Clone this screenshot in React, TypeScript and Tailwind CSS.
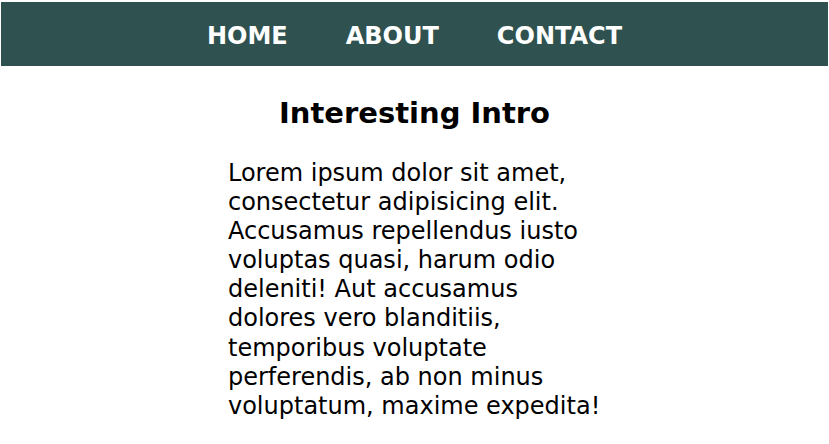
export default function App() {
  const font = { fontFamily: '"DejaVu Sans", Verdana, sans-serif' };
  return (
    <div className="min-h-screen bg-white text-black" style={font}>
      <nav className="mx-[1px] mt-[2px] flex h-[64px] items-center justify-center bg-[#2f5250] pt-[4px]">
        <ul className="flex items-center gap-[58px] text-[24px] font-bold leading-[28px] text-white">
          <li>HOME</li>
          <li>ABOUT</li>
          <li>CONTACT</li>
        </ul>
      </nav>
      <main className="flex flex-col items-center">
        <h1 className="mt-[30px] text-[29px] font-bold leading-[35px]">Interesting Intro</h1>
        <p className="mt-[28px] w-[45%] text-[24px] leading-[29.1px]">
          Lorem ipsum dolor sit amet, consectetur adipisicing elit. Accusamus repellendus iusto voluptas quasi, harum odio deleniti! Aut accusamus dolores vero blanditiis, temporibus voluptate perferendis, ab non minus voluptatum, maxime expedita!
        </p>
      </main>
    </div>
  );
}
